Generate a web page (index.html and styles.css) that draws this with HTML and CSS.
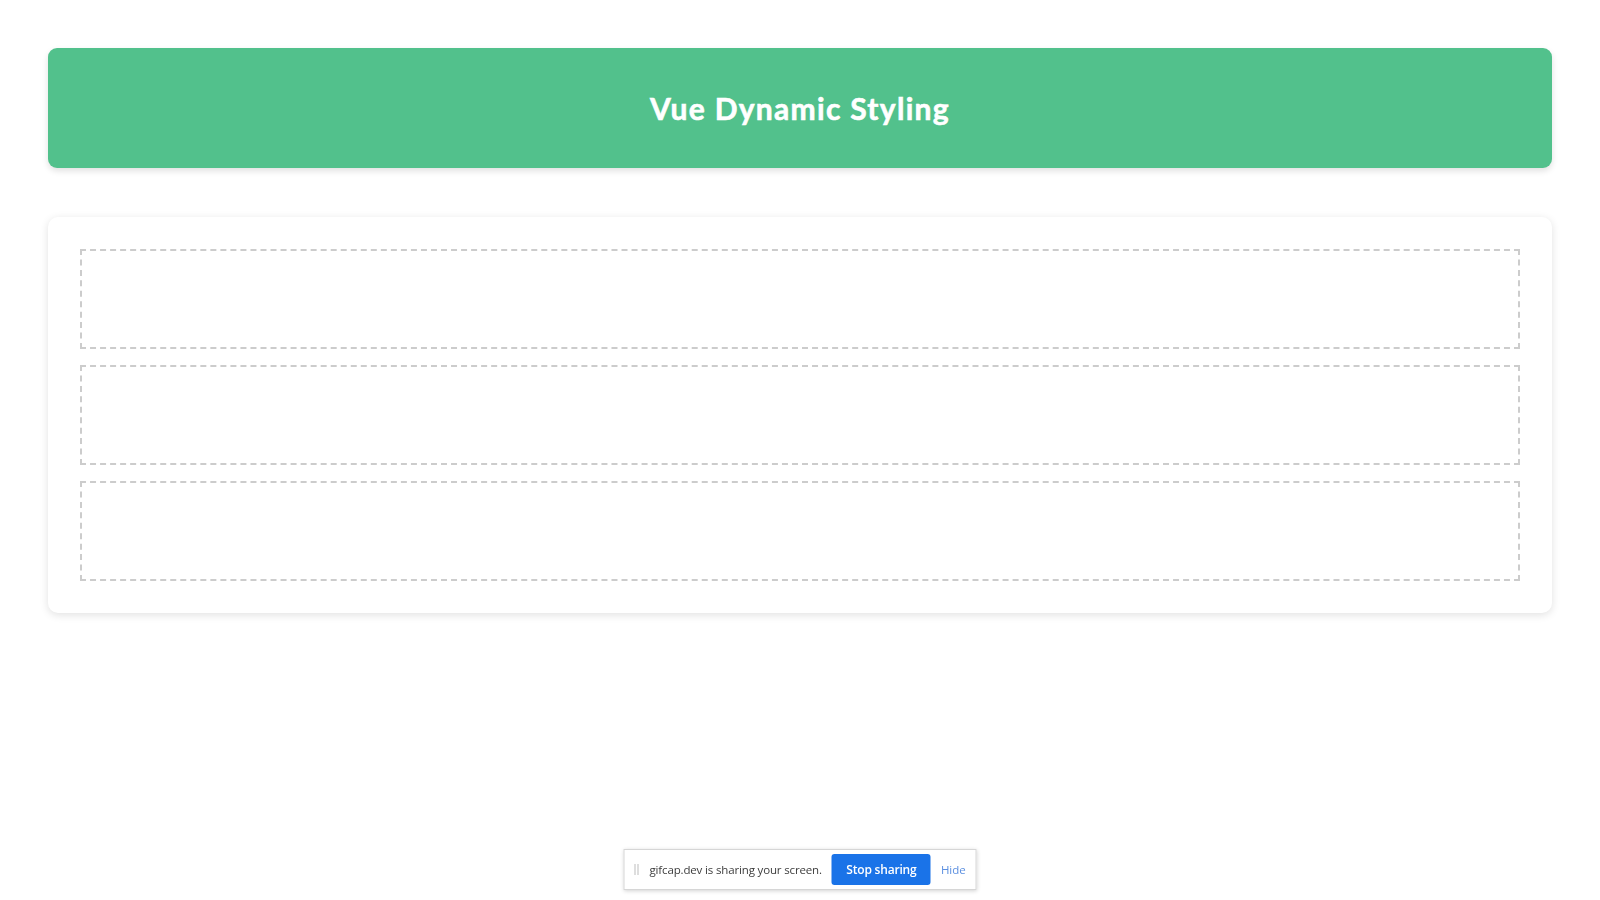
FILE: index.html
```html
<!DOCTYPE html>
<html lang="en">
<head>
<meta charset="utf-8">
<title>Vue Dynamic Styling</title>
<link rel="stylesheet" href="styles.css">
</head>
<body>
<div class="app">
  <header class="hero">
    <h1 class="hero-title">Vue Dynamic Styling</h1>
  </header>
  <section class="card">
    <div class="slot"></div>
    <div class="slot"></div>
    <div class="slot"></div>
  </section>
</div>
<div class="share-bar">
  <span class="grip"></span>
  <span class="share-text">gifcap.dev is sharing your screen.</span>
  <button class="stop-btn">Stop sharing</button>
  <span class="hide-link">Hide</span>
</div>
</body>
</html>
```
FILE: styles.css
```css
html, body {
  margin: 0;
  padding: 0;
  background: #ffffff;
  height: 100%;
}
body {
  font-family: Lato, "Noto Sans", sans-serif;
}
.app {
  padding: 48px;
  display: flex;
  flex-direction: column;
  gap: 49px;
}
.hero {
  height: 120px;
  background: #52c18c;
  border-radius: 9px;
  box-shadow: 0 3px 6px rgba(0, 0, 0, 0.12);
  display: flex;
  align-items: center;
  justify-content: center;
}
.hero-title {
  margin: 0;
  color: #ffffff;
  font-family: Lato, "Noto Sans", sans-serif;
  font-weight: 700;
  font-size: 30px;
  letter-spacing: 1.3px;
  -webkit-text-stroke: 0.6px #ffffff;
}
.card {
  background: #ffffff;
  border-radius: 10px;
  box-shadow: 0 2px 8px rgba(0, 0, 0, 0.12);
  padding: 32px;
  display: flex;
  flex-direction: column;
  gap: 16px;
}
.slot {
  height: 96px;
  border: 2px dashed #cccccc;
}
.share-bar {
  position: fixed;
  left: 50%;
  bottom: 10px;
  transform: translateX(-50%);
  width: 351px;
  height: 39px;
  background: #ffffff;
  border: 1px solid #d6d6d6;
  box-shadow: 0 1px 4px rgba(0, 0, 0, 0.18);
  display: flex;
  align-items: center;
  font-family: "Open Sans", "Noto Sans", sans-serif;
  font-size: 11.5px;
  color: #3c3c3c;
}
.grip {
  width: 4px;
  height: 11px;
  margin-left: 10px;
  border-left: 1px solid #bdbdbd;
  border-right: 1px solid #bdbdbd;
  box-sizing: border-box;
}
.share-text {
  margin-left: 11px;
  letter-spacing: -0.15px;
  white-space: nowrap;
}
.stop-btn {
  margin-left: 10px;
  width: 99px;
  height: 31px;
  border: none;
  border-radius: 3px;
  background: #1a73e8;
  color: #ffffff;
  font-family: "Open Sans", "Noto Sans", sans-serif;
  font-size: 12px;
  font-weight: 600;
  letter-spacing: -0.2px;
  padding: 0;
}
.hide-link {
  margin-left: 10px;
  color: #5b8fe0;
  font-size: 11.5px;
}
```
